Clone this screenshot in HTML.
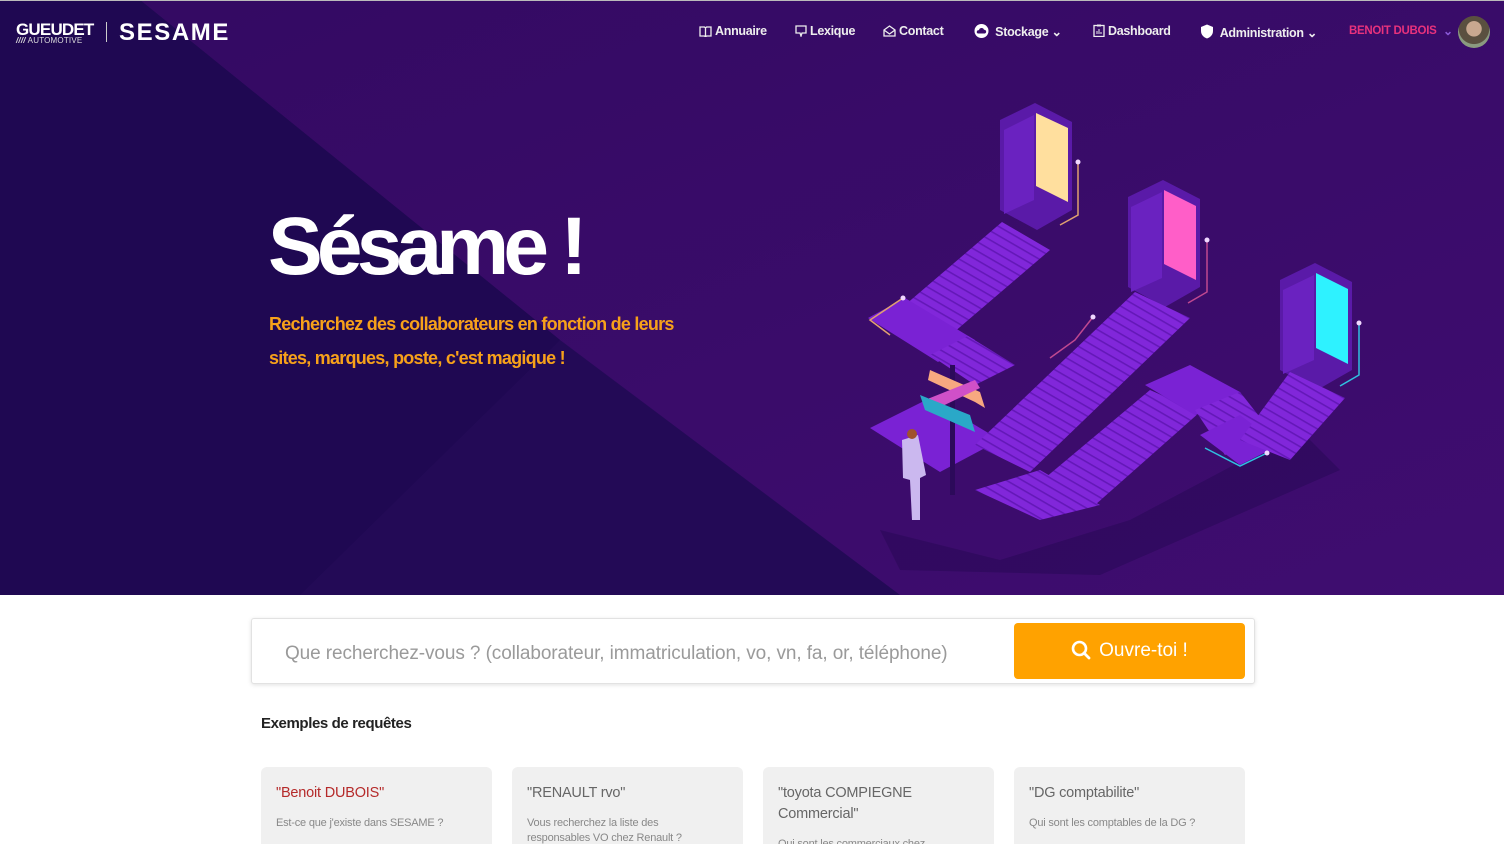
<!DOCTYPE html>
<html><head><meta charset="utf-8"><style>
*{margin:0;padding:0;box-sizing:border-box}
html,body{width:1504px;height:844px;overflow:hidden}
body{background:#fff;font-family:"Liberation Sans",sans-serif;position:relative}
.hero{position:absolute;left:0;top:0;width:1504px;height:595px;overflow:hidden;background:#2a0a5c}
.abs{position:absolute}
.nav{position:absolute;top:24px;font-size:12.5px;font-weight:bold;color:#eee;letter-spacing:-0.3px;white-space:nowrap}
.nav svg{vertical-align:-2px;margin-right:3px}
.title{left:268px;top:200px;font-size:82px;font-weight:bold;color:#fff;letter-spacing:-5.8px}
.sub{left:269px;top:307px;font-size:18px;font-weight:bold;color:#f7a11a;letter-spacing:-0.75px;line-height:34px}
.search{left:251px;top:618px;width:1004px;height:66px;border:1px solid #e2e2e2;border-radius:3px;box-shadow:0 1px 4px rgba(0,0,0,.12);background:#fff}
.ph{left:33px;top:24px;font-size:19px;color:#9a9a9a;letter-spacing:-0.1px;white-space:nowrap}
.btn{left:762px;top:4px;width:231px;height:56px;background:#ffa200;border-radius:4px;color:#fff;font-size:19px;text-align:center;line-height:56px}
.card{position:absolute;top:767px;width:231px;height:100px;background:#f0f0f0;border-radius:6px;padding:15px 15px}
.card h4{font-size:14.5px;font-weight:normal;color:#666;line-height:21px;letter-spacing:-0.2px;margin-top:1px}
.card p{font-size:11px;color:#888;margin-top:12px;line-height:15px;letter-spacing:-0.2px;max-width:172px}
</style></head><body>
<div class="hero">
<svg class="abs" style="left:0;top:0" width="1504" height="595" viewBox="0 0 1504 595">
<defs>
<linearGradient id="bg" x1="0" y1="0" x2="1" y2="1"><stop offset="0" stop-color="#330a62"/><stop offset="1" stop-color="#3f0d70"/></linearGradient>
<pattern id="st" width="8" height="8" patternUnits="userSpaceOnUse" patternTransform="rotate(30)"><rect width="8" height="8" fill="#8127da"/><rect width="8" height="1.6" fill="#6418b8"/></pattern>
</defs>
<rect width="1504" height="595" fill="url(#bg)"/>
<polygon points="0,0 140,0 560,340 900,595 0,595" fill="#230a56"/>
<polygon points="0,0 140,0 560,340 300,595 0,595" fill="#1f0852"/>
<!-- shadows -->
<polygon points="880,530 1000,560 1130,520 1300,430 1340,470 1100,575 900,570" fill="#2a0858" opacity=".6"/>
<!-- doors -->
<g>
<polygon points="1000,120 1035,103 1072,122 1072,210 1037,230 1000,210" fill="#5a1aa8"/>
<polygon points="1036,113 1068,128 1068,202 1036,186" fill="#ffdf9e"/>
<polygon points="1004,130 1034,115 1034,200 1004,214" fill="#6a22c0"/>
<polygon points="1128,197 1163,180 1200,199 1200,287 1165,307 1128,287" fill="#5a1aa8"/>
<polygon points="1164,190 1196,206 1196,280 1164,264" fill="#ff5ec8"/>
<polygon points="1131,207 1162,192 1162,278 1131,292" fill="#6a22c0"/>
<polygon points="1280,280 1315,263 1352,282 1352,370 1317,390 1280,370" fill="#5a1aa8"/>
<polygon points="1316,273 1348,289 1348,364 1316,348" fill="#2ef2ff"/>
<polygon points="1283,290 1314,275 1314,360 1283,374" fill="#6a22c0"/>
</g>
<!-- stairs -->
<polygon points="905,305 1002,222 1050,250 953,333" fill="url(#st)"/>
<polygon points="868,318 905,298 975,340 938,362" fill="#7a22d4"/>
<polygon points="930,355 968,336 1015,365 975,385" fill="url(#st)"/>
<polygon points="870,428 930,398 1000,440 940,472" fill="#7a22d4"/>
<polygon points="975,445 1135,292 1190,318 1030,472" fill="url(#st)"/>
<polygon points="975,490 1040,470 1100,505 1040,520" fill="url(#st)"/>
<polygon points="1045,478 1150,390 1200,412 1095,505" fill="url(#st)"/>
<polygon points="1145,385 1190,365 1240,392 1195,415" fill="#7a22d4"/>
<polygon points="1195,410 1240,392 1270,430 1225,455" fill="url(#st)"/>
<polygon points="1200,435 1240,415 1280,445 1240,465" fill="#7a22d4"/>
<polygon points="1240,440 1290,372 1345,398 1290,460" fill="url(#st)"/>
<!-- glow lines -->
<g fill="none" stroke-width="1.5">
<polyline points="903,298 870,320 890,335" stroke="#e0a070"/>
<polyline points="1078,162 1078,215 1060,225" stroke="#e0a070"/>
<polyline points="1207,240 1207,292 1188,303" stroke="#c04890"/>
<polyline points="1093,317 1075,340 1050,358" stroke="#c04890"/>
<polyline points="1359,323 1359,375 1340,386" stroke="#30c0e0"/>
<polyline points="1267,453 1240,466 1205,448" stroke="#30c0e0"/>
</g>
<g fill="#f0d8ff"><circle cx="903" cy="298" r="2.5"/><circle cx="1078" cy="162" r="2.5"/><circle cx="1207" cy="240" r="2.5"/><circle cx="1093" cy="317" r="2.5"/><circle cx="1359" cy="323" r="2.5"/><circle cx="1267" cy="453" r="2.5"/></g>
<!-- signpost -->
<rect x="950" y="365" width="5" height="130" fill="#2c0a5a"/>
<polygon points="930,370 980,392 985,408 975,402 928,380" fill="#f8a880"/>
<polygon points="925,400 975,380 980,388 930,412" fill="#d050c8"/>
<polygon points="920,395 970,415 975,432 925,410" fill="#2aa8c8"/>
<!-- person -->
<polygon points="902,440 918,435 926,475 920,478 920,520 912,520 910,480 903,478" fill="#cbb8ef"/>
<circle cx="912" cy="434" r="5" fill="#a0522d"/>
</svg>
<!-- logo -->
<div class="abs" style="left:16px;top:20px;color:#fff;font-weight:bold;font-size:17px;letter-spacing:-0.8px">GUEUDET</div>
<div class="abs" style="left:16px;top:36px;color:#ddd;font-size:8px;letter-spacing:0.2px"><b style="font-style:italic">////</b> AUTOMOTIVE</div>
<div class="abs" style="left:106px;top:22px;width:1px;height:20px;background:#ccc"></div>
<div class="abs" style="left:119px;top:19px;color:#fff;font-weight:bold;font-size:24px;letter-spacing:1.6px">SESAME</div>
<!-- nav -->
<div class="nav" style="left:699px"><svg width="13" height="11" viewBox="0 0 13 11"><path d="M1 1h4.5l1 1 1-1H12v9H7.5l-1 1-1-1H1z M6.5 2v8" fill="none" stroke="#eee" stroke-width="1.3"/></svg>Annuaire</div>
<div class="nav" style="left:795px"><svg width="12" height="12" viewBox="0 0 12 12"><path d="M1 1h10v7H7l-1 3-1-3H1z" fill="none" stroke="#eee" stroke-width="1.3"/></svg>Lexique</div>
<div class="nav" style="left:883px"><svg width="13" height="12" viewBox="0 0 13 12"><path d="M1 5l5.5-4 5.5 4v6H1z M1 5l5.5 4 5.5-4" fill="none" stroke="#eee" stroke-width="1.3"/></svg>Contact</div>
<div class="nav" style="left:974px"><svg width="15" height="14" viewBox="0 0 15 14"><circle cx="7.5" cy="7" r="7" fill="#fff"/><path d="M4 9.5h7a2 2 0 0 0-1-3.8A2.6 2.6 0 0 0 5 6.2 1.7 1.7 0 0 0 4 9.5z" fill="#3a0c6a"/></svg> Stockage ⌄</div>
<div class="nav" style="left:1093px"><svg width="12" height="13" viewBox="0 0 12 13"><rect x="1" y="1.5" width="10" height="11" fill="none" stroke="#eee" stroke-width="1.3"/><rect x="4" y="0.5" width="4" height="2" fill="#eee"/><path d="M4 10V7M6 10V5M8 10V8" stroke="#eee"/></svg>Dashboard</div>
<div class="nav" style="left:1200px"><svg width="14" height="15" viewBox="0 0 14 15"><path d="M7 0.5L13 3v4c0 4-3 6.5-6 7.5C4 13.5 1 11 1 7V3z" fill="#fff"/></svg> Administration ⌄</div>
<div class="nav" style="left:1349px;color:#e8327c;font-size:11.5px;top:25px">BENOIT DUBOIS</div>
<div class="nav" style="left:1443px;color:#8a5ad8;font-size:12px">⌄</div>
<div class="abs" style="left:1458px;top:16px;width:32px;height:32px;border-radius:50%;background:radial-gradient(circle at 50% 40%,#c8a890 0 30%,#5a5040 32% 60%,#8a9a80 62%)"></div>
<div class="abs title">Sésame !</div>
<div class="abs sub">Recherchez des collaborateurs en fonction de leurs<br>sites, marques, poste, c'est magique !</div>
</div>
<div class="abs" style="left:0;top:0;width:1504px;height:1px;background:#bbb"></div>
<div class="abs search">
<div class="abs ph">Que recherchez-vous ? (collaborateur, immatriculation, vo, vn, fa, or, téléphone)</div>
<div class="abs btn"><svg width="20" height="20" viewBox="0 0 20 20" style="vertical-align:-4px;margin-right:8px"><circle cx="8.5" cy="8.5" r="6.5" fill="none" stroke="#fff" stroke-width="2.6"/><path d="M13 13l5 5" stroke="#fff" stroke-width="2.8" stroke-linecap="round"/></svg>Ouvre-toi !</div>
</div>
<div class="abs" style="left:261px;top:715px;font-size:15px;font-weight:bold;color:#222;letter-spacing:-0.4px">Exemples de requêtes</div>
<div class="card" style="left:261px"><h4 style="color:#b52a2a">"Benoit DUBOIS"</h4><p>Est-ce que j'existe dans SESAME ?</p></div>
<div class="card" style="left:512px"><h4>"RENAULT rvo"</h4><p>Vous recherchez la liste des responsables VO chez Renault ?</p></div>
<div class="card" style="left:763px"><h4>"toyota COMPIEGNE Commercial"</h4><p>Qui sont les commerciaux chez Toyota Compiègne ?</p></div>
<div class="card" style="left:1014px"><h4>"DG comptabilite"</h4><p>Qui sont les comptables de la DG ?</p></div>
</body></html>
